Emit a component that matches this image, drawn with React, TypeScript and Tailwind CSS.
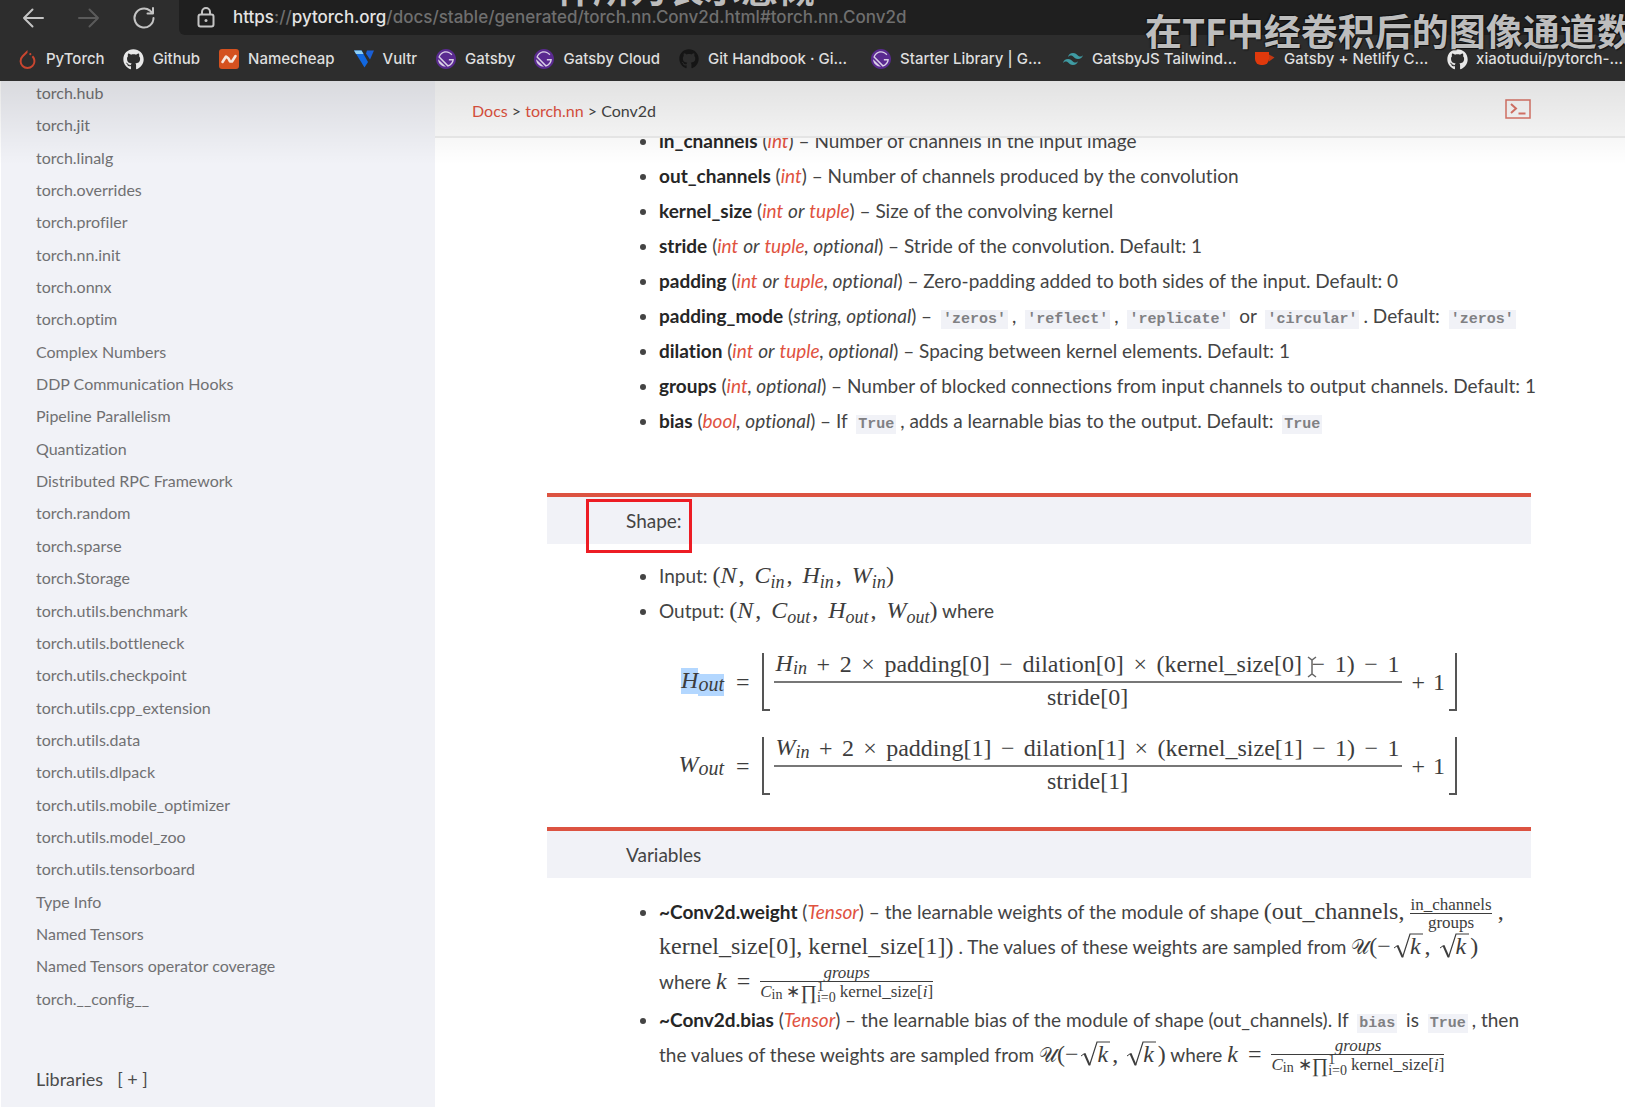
import type { ReactNode } from "react";
import { FaGithub } from "react-icons/fa";
import { SiGatsby, SiTailwindcss, SiPytorch } from "react-icons/si";

const SIDEBAR = [
  "torch.hub", "torch.jit", "torch.linalg", "torch.overrides", "torch.profiler", "torch.nn.init",
  "torch.onnx", "torch.optim", "Complex Numbers", "DDP Communication Hooks", "Pipeline Parallelism",
  "Quantization", "Distributed RPC Framework", "torch.random", "torch.sparse", "torch.Storage",
  "torch.utils.benchmark", "torch.utils.bottleneck", "torch.utils.checkpoint",
  "torch.utils.cpp_extension", "torch.utils.data", "torch.utils.dlpack",
  "torch.utils.mobile_optimizer", "torch.utils.model_zoo", "torch.utils.tensorboard", "Type Info",
  "Named Tensors", "Named Tensors operator coverage", "torch.__config__",
];

/* ---------- browser chrome ---------- */

function GatsbyIcon() {
  return (
    <span className="flex size-[18px] items-center justify-center rounded-full bg-[#d9cfe6]">
      <SiGatsby className="size-5 shrink-0 text-[#5a2a90]" />
    </span>
  );
}

function NamecheapIcon() {
  return (
    <svg viewBox="0 0 22 22" className="size-[22px] shrink-0">
      <rect x="1" y="1" width="20" height="20" rx="3" fill="#d4511f" />
      <path d="M4.500 14L8 8.500l2.500 2 1.500 3 2 0L17.500 8" fill="none" stroke="#f6e6dc" strokeWidth="2.600" strokeLinecap="round" strokeLinejoin="round" />
    </svg>
  );
}

function VultrIcon() {
  return (
    <svg viewBox="0 0 22 20" className="h-5 w-[22px] shrink-0">
      <path d="M1 1.500h7.500L15 13l-3.500 5.500z" fill="#1268e0" />
      <path d="M1 1.500h7.500l2 3.500H3z" fill="#8fd0f5" />
      <path d="M14 1.500h7L17 10.500 13 4.500z" fill="#1a5fd6" />
    </svg>
  );
}

function MugIcon() {
  return (
    <svg viewBox="0 0 22 18" className="h-[18px] w-[22px] shrink-0">
      <path d="M1 2h14v7a6 6 0 0 1-6 6H7a6 6 0 0 1-6-6z" fill="#e0390c" />
      <path d="M15 4.500l5.500 3-5.500 4z" fill="#c23812" />
    </svg>
  );
}

const BOOKMARKS: { label: string; icon: ReactNode; long?: boolean }[] = [
  { label: "PyTorch", icon: <SiPytorch className="size-[19px] text-[#c94630]" /> },
  { label: "Github", icon: <FaGithub className="size-[21px] text-[#e8e8e8]" /> },
  { label: "Namecheap", icon: <NamecheapIcon /> },
  { label: "Vultr", icon: <VultrIcon /> },
  { label: "Gatsby", icon: <GatsbyIcon /> },
  { label: "Gatsby Cloud", icon: <GatsbyIcon /> },
  { label: "Git Handbook · Gi...", icon: <FaGithub className="size-5 text-[#151515]" />, long: true },
  { label: "Starter Library | G...", icon: <GatsbyIcon />, long: true },
  { label: "GatsbyJS Tailwind...", icon: <SiTailwindcss className="size-5 text-[#3f9ba3]" />, long: true },
  { label: "Gatsby + Netlify C...", icon: <MugIcon />, long: true },
  { label: "xiaotudui/pytorch-...", icon: <FaGithub className="size-[21px] text-[#e8e8e8]" />, long: true },
];

function Chrome() {
  return (
    <header className="relative h-[81px] shrink-0 overflow-hidden bg-[#2d2d2d] font-['Inter',sans-serif]">
      <div className="flex h-[35px]">
        <div className="flex w-[179px] shrink-0 items-center pl-5">
          <button type="button" aria-label="Back" className="mr-[30px] text-[#c4c4c4]">
            <svg viewBox="0 0 26 26" className="size-[26px]" fill="none" stroke="currentColor" strokeWidth="2" strokeLinecap="round" strokeLinejoin="round">
              <path d="M23 13H4M12.500 4.500L4 13l8.500 8.500" />
            </svg>
          </button>
          <button type="button" aria-label="Forward" className="mr-[29px] text-[#5a5a5a]">
            <svg viewBox="0 0 26 26" className="size-[26px]" fill="none" stroke="currentColor" strokeWidth="2" strokeLinecap="round" strokeLinejoin="round">
              <path d="M3 13h19M13.500 4.500L22 13l-8.500 8.500" />
            </svg>
          </button>
          <button type="button" aria-label="Reload" className="text-[#c4c4c4]">
            <svg viewBox="0 0 26 26" className="size-[26px]" fill="none" stroke="currentColor" strokeWidth="2" strokeLinecap="round" strokeLinejoin="round">
              <path d="M22.500 13a9.500 9.500 0 1 1-3.500-7.400l2.500 2.400M22 3v5.500h-5.500" />
            </svg>
          </button>
        </div>
        <div className="flex flex-1 items-center rounded-bl-md bg-[#1f1f1f] pl-[18px]">
          <svg viewBox="0 0 18 22" className="h-[22px] w-[18px] shrink-0 text-[#c4c4c4]" fill="none" stroke="currentColor" strokeWidth="2" strokeLinejoin="round">
            <rect x="1.500" y="7.500" width="15" height="12" rx="2" />
            <path d="M5 7.500V5a4 4 0 0 1 8 0v2.500" />
            <circle cx="9" cy="13.500" r="1.500" fill="currentColor" stroke="none" />
          </svg>
          <p className="ml-[18px] text-[17px] font-medium whitespace-nowrap text-[#6f6f6f]">
            <span className="text-[#e4e4e4]">https</span>://
            <span className="text-[#e4e4e4]">pytorch.org</span>
            /docs/stable/generated/torch.nn.Conv2d.html#torch.nn.Conv2d
          </p>
        </div>
      </div>
      <nav aria-label="Bookmarks" className="flex h-[46px] items-center gap-[18px] pt-0.5 pl-4">
        {BOOKMARKS.map((b) => (
          <a key={b.label} href="#" className="flex shrink-0 items-center gap-2 text-[15px] font-medium whitespace-nowrap text-[#dedede]">
            <span className="flex w-[22px] justify-center">{b.icon}</span>
            <span className={b.long ? "w-36" : ""}>{b.label}</span>
          </a>
        ))}
      </nav>
      <p className="absolute -top-[35px] left-[556px] font-['Noto_Sans_CJK_SC',sans-serif] text-[37px] leading-[45px] font-bold whitespace-nowrap text-[#bdbdbd]">
        什所为表示感慨
      </p>
      <p className="absolute top-2 left-[1145px] font-['Noto_Sans_CJK_SC',sans-serif] text-[37px] leading-[45px] font-bold whitespace-nowrap text-[#bdbdbd] [text-shadow:1px_1px_1px_#111,-1px_-1px_1px_#111]">
        在TF中经卷积后的图像通道数
      </p>
    </header>
  );
}

/* ---------- text helpers ---------- */

function Red({ children }: { children: ReactNode }) {
  return <a href="#" className="text-[#e0523f] italic">{children}</a>;
}

function Code({ children }: { children: ReactNode }) {
  return (
    <code className="mx-1 bg-[#f1f2f7] px-0.5 py-px font-['Liberation_Mono',monospace] text-[15px] leading-none font-bold text-[#808083]">
      {children}
    </code>
  );
}

function Param({ name, type, children }: { name: string; type: ReactNode; children: ReactNode }) {
  return (
    <li className="leading-[35px]">
      <strong className="font-bold text-[#262626]">{name}</strong> ({type}) – {children}
    </li>
  );
}

const OPT = (
  <>
    <Red>int</Red> <em>or</em> <Red>tuple</Red><em>, optional</em>
  </>
);

function SectionBar({ children }: { children: ReactNode }) {
  return (
    <h2 className="flex h-[51px] items-center border-t-4 border-[#dc5341] bg-[#f1f2f7] pt-px pl-[79px] text-[19px] font-normal">
      {children}
    </h2>
  );
}

/* ---------- math ---------- */

function M({ children }: { children: ReactNode }) {
  return <span className="font-['Liberation_Serif',serif] text-[24px] leading-none whitespace-nowrap text-[#3d3d3d]">{children}</span>;
}

function Sub({ v, s }: { v: string; s: string }) {
  return (
    <span className="italic">
      {v}
      <sub className="text-[18px]">{s}</sub>
    </span>
  );
}

function Tuple({ items }: { items: ReactNode[] }) {
  return (
    <M>
      (
      {items.map((item, n) => (
        <span key={n}>
          {n > 0 && <span className="mr-1 ml-0.5">, </span>}
          {item}
        </span>
      ))}
      )
    </M>
  );
}

function Root() {
  return (
    <span className="relative mx-0.5 pr-0.5 pl-[17px] italic">
      k
      <svg viewBox="0 0 30 26" className="absolute bottom-0 left-0 h-[26px] w-[30px]" fill="none" stroke="currentColor">
        <path d="M1 15l3.500-2.500" strokeWidth="1" />
        <path d="M4.500 12.500l5 11.500" strokeWidth="2" />
        <path d="M9.500 24.500L17 1h13" strokeWidth="1.200" />
      </svg>
    </span>
  );
}

function Uniform() {
  return (
    <M>
      <span className="font-['DejaVu_Serif',serif] text-[20px]">𝒰</span>(−<Root />, <Root />)
    </M>
  );
}

function KFraction() {
  return (
    <M>
      <i>k</i>
      <span className="mx-2.5">=</span>
      <span className="inline-flex flex-col items-center align-middle text-[17px] leading-4">
        <i>groups</i>
        <span className="flex h-[21px] items-center border-t border-current">
          <i>C</i>
          <sub className="text-[14px]">in</sub>
          <span className="ml-1">∗</span>
          <span className="text-[20px]">∏</span>
          <span className="mr-1 inline-flex flex-col text-[14px] leading-[11px]">
            <span>1</span>
            <span>i=0</span>
          </span>
          kernel_size[<i>i</i>]
        </span>
      </span>
    </M>
  );
}

function Formula({ v, i, selected }: { v: string; i: number; selected?: boolean }) {
  return (
    <div className="flex h-[58px] items-center font-['Liberation_Serif',serif] text-[24px] leading-none whitespace-nowrap text-[#3d3d3d]">
      <div className="flex w-[48px] justify-end">
        <span className="flex italic">
          <span className={selected ? "h-[26px] bg-[#b3d7ff]" : "h-[26px]"}>{v}</span>
          <span className={selected ? "mt-1.5 h-[22px] bg-[#b3d7ff] text-[20px]" : "mt-1.5 h-[22px] text-[20px]"}>out</span>
        </span>
      </div>
      <span className="mx-3">=</span>
      <span className="mr-1 h-full w-[8px] border-b-2 border-l-2 border-[#555]" />
      <div className="flex w-[628px] flex-col">
        <div className="flex h-[30px] items-center justify-between border-b-2 border-[#777] px-0.5 pb-1.5">
          <span className="flex italic">
            {v}
            <span className="mt-2 text-[18px]">in</span>
          </span>
          <span>+</span>
          <span>2</span>
          <span>×</span>
          <span>padding[{i}]</span>
          <span>−</span>
          <span>dilation[{i}]</span>
          <span>×</span>
          <span>(kernel_size[{i}]</span>
          <span className="relative">
            −
            {selected && (
              <svg viewBox="0 0 10 22" className="absolute top-1 -left-1 h-[22px] w-[10px]" fill="none" stroke="#666" strokeWidth="1.500">
                <path d="M1 1l4 3 4-3M5 4v14M1 21l4-3 4 3" />
              </svg>
            )}
          </span>
          <span>1)</span>
          <span>−</span>
          <span>1</span>
        </div>
        <div className="flex h-7 items-center justify-center">stride[{i}]</div>
      </div>
      <span className="ml-2.5">+</span>
      <span className="ml-2">1</span>
      <span className="ml-1 h-full w-[8px] border-r-2 border-b-2 border-[#555]" />
    </div>
  );
}

/* ---------- page ---------- */

export default function App() {
  return (
    <div className="flex min-h-screen flex-col overflow-hidden bg-white font-['Lato',sans-serif] [font-variant-ligatures:none]">
      <Chrome />
      <div className="relative flex flex-1">
        <aside className="flex w-[435px] shrink-0 flex-col border-l border-white bg-[#f1f2f7] pl-[35px] text-[16px] leading-6 text-[#707072]">
          <ul className="flex flex-1 flex-col justify-between">
            {SIDEBAR.map((s) => (
              <li key={s}><a href="#">{s}</a></li>
            ))}
          </ul>
          <div className="mt-14 mb-4 flex gap-3.5 text-[18px] text-[#4c4c4c]">
            <span>Libraries</span>
            <button type="button" aria-label="Expand libraries">[ + ]</button>
          </div>
        </aside>
        <main className="min-w-0 flex-1 text-[19px] text-[#444]">
          <div className="relative z-10 flex h-[57px] items-center justify-between border-b-2 border-[#ececec] bg-[#fbfbfb] pr-[94px] pl-[37px] text-[16px]">
            <nav aria-label="Breadcrumb" className="pt-1">
              <a href="#" className="text-[#e0523f]">Docs</a> &gt; <a href="#" className="text-[#e0523f]">torch.nn</a> &gt; Conv2d
            </nav>
            <button type="button" aria-label="Open console">
              <svg viewBox="0 0 26 20" className="h-5 w-[26px]" fill="none" stroke="#dc7568" strokeWidth="1.500">
                <rect x="1" y="1" width="24" height="18" />
                <path d="M6 5l5 4.500L6 14" strokeWidth="2" />
                <path d="M13.500 14.500h7" strokeWidth="2" />
              </svg>
            </button>
          </div>
          <article className="-mt-[15px] pr-[94px] pl-28">
            <ul className="list-disc pl-28 whitespace-nowrap">
              <Param name="in_channels" type={<Red>int</Red>}>Number of channels in the input image</Param>
              <Param name="out_channels" type={<Red>int</Red>}>Number of channels produced by the convolution</Param>
              <Param name="kernel_size" type={<><Red>int</Red> <em>or</em> <Red>tuple</Red></>}>Size of the convolving kernel</Param>
              <Param name="stride" type={OPT}>Stride of the convolution. Default: 1</Param>
              <Param name="padding" type={OPT}>Zero-padding added to both sides of the input. Default: 0</Param>
              <Param name="padding_mode" type={<em>string, optional</em>}>
                <Code>'zeros'</Code>, <Code>'reflect'</Code>, <Code>'replicate'</Code> or <Code>'circular'</Code>. Default: <Code>'zeros'</Code>
              </Param>
              <Param name="dilation" type={OPT}>Spacing between kernel elements. Default: 1</Param>
              <Param name="groups" type={<><Red>int</Red><em>, optional</em></>}>
                Number of blocked connections from input channels to output channels. Default: 1
              </Param>
              <Param name="bias" type={<><Red>bool</Red><em>, optional</em></>}>
                If <Code>True</Code>, adds a learnable bias to the output. Default: <Code>True</Code>
              </Param>
            </ul>

            <section className="relative mt-[55px]">
              <SectionBar>Shape:</SectionBar>
              <span className="absolute top-1.5 left-[39px] h-[54px] w-[106px] border-[3px] border-[#ed1c24]" />
              <ul className="mt-3.5 list-disc pl-28">
                <li className="h-[35px] leading-[35px]">
                  Input: <Tuple items={[<i>N</i>, <Sub v="C" s="in" />, <Sub v="H" s="in" />, <Sub v="W" s="in" />]} />
                </li>
                <li className="h-[35px] leading-[35px]">
                  Output: <Tuple items={[<i>N</i>, <Sub v="C" s="out" />, <Sub v="H" s="out" />, <Sub v="W" s="out" />]} /> where
                </li>
              </ul>
              <div className="mt-[25px] flex flex-col gap-[26px] pl-[129px]">
                <Formula v="H" i={0} selected />
                <Formula v="W" i={1} />
              </div>
            </section>

            <section className="mt-8">
              <SectionBar>Variables</SectionBar>
              <ul className="mt-4 list-disc pl-28 leading-[35px] whitespace-nowrap">
                <li>
                  <strong className="text-[#262626]">~Conv2d.weight</strong> (<Red>Tensor</Red>) – the learnable weights of the module of shape{" "}
                  <M>
                    (out_channels,{" "}
                    <span className="-my-1 inline-flex flex-col items-center align-middle text-[17px] leading-[17px]">
                      <span className="border-b border-current">in_channels</span>
                      <span>groups</span>
                    </span>{" "}
                    ,
                  </M>
                  <br />
                  <M>kernel_size[0], kernel_size[1])</M> . The values of these weights are sampled from <Uniform />
                  <br />
                  where <KFraction />
                </li>
                <li>
                  <strong className="text-[#262626]">~Conv2d.bias</strong> (<Red>Tensor</Red>) – the learnable bias of the module of shape (out_channels). If <Code>bias</Code> is <Code>True</Code>, then
                  <br />
                  the values of these weights are sampled from <Uniform /> where <KFraction />
                </li>
              </ul>
            </section>
          </article>
        </main>
        <div className="pointer-events-none absolute inset-x-0 top-0 z-20 h-[84px] bg-linear-to-b from-black/10 to-transparent" />
      </div>
    </div>
  );
}
